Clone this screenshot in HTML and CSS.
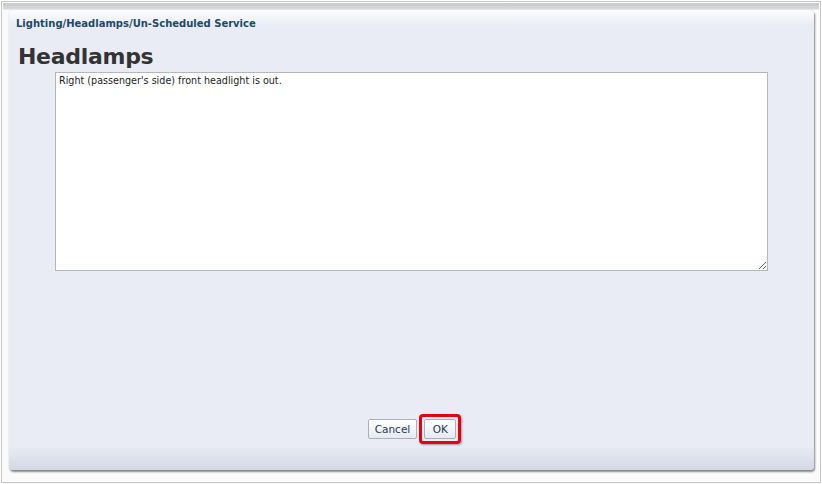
FILE: index.html
```html
<!DOCTYPE html>
<html>
<head>
<meta charset="utf-8">
<link rel="stylesheet" href="styles.css">
</head>
<body>
<div class="frame">
  <div class="backdrop">
    <div class="dialog">
      <div class="crumb">Lighting/Headlamps/Un-Scheduled Service</div>
      <h1 class="title">Headlamps</h1>
      <div class="field">
        <textarea class="notes">Right (passenger's side) front headlight is out.</textarea>
      </div>
      <div class="spacer"></div>
      <div class="actions">
        <button class="btn">Cancel</button>
        <span class="highlight"><button class="btn ok">OK</button></span>
      </div>
    </div>
  </div>
</div>
</body>
</html>
```
FILE: styles.css
```css
html, body {
  margin: 0;
  padding: 0;
  width: 822px;
  height: 484px;
  background: #ffffff;
  overflow: hidden;
}
.frame {
  box-sizing: border-box;
  width: 820px;
  height: 482px;
  margin: 1px 0 0 1px;
  border: 1px solid #c4c4c4;
  padding: 1px;
  background: #fff;
}
.backdrop {
  box-sizing: border-box;
  height: 100%;
  background: linear-gradient(#c7c8cc 0, #d8d9dc 6px, #fafafa 7px);
  padding: 7px 5px 11px 6px;
  display: flex;
}
.dialog {
  box-sizing: border-box;
  flex: 1;
  border-radius: 4px;
  background: linear-gradient(#fcfdfe 0, #e9ecf4 16px, #e9ecf4 436px, #d3d8e5 100%);
  box-shadow: 1px 2px 2px rgba(0,0,0,0.45), 0 0 1px rgba(0,0,0,0.25);
  display: flex;
  flex-direction: column;
  padding: 7px 0 0 0;
}
.crumb {
  font-family: "DejaVu Sans", Tahoma, sans-serif;
  font-weight: bold;
  font-size: 10px;
  color: #1e4a66;
  padding-left: 7px;
  line-height: 14px;
}
.title {
  margin: 14px 0 0 9px;
  font-family: "DejaVu Sans", sans-serif;
  font-weight: bold;
  font-size: 22px;
  line-height: 24px;
  color: #333333;
  letter-spacing: -0.3px;
}
.field {
  padding: 0 46px 0 46px;
  margin-top: 3px;
}
.notes {
  display: block;
  box-sizing: border-box;
  width: 100%;
  height: 199px;
  border: 1px solid #b3b6bb;
  background: #fff;
  font-family: "DejaVu Sans", sans-serif;
  font-size: 9.6px;
  color: #222;
  padding: 2px 3px;
  resize: both;
  margin: 0;
  outline: none;
}
.spacer {
  flex: 1;
}
.actions {
  display: flex;
  justify-content: center;
  align-items: center;
  gap: 2px;
  padding-left: 6px;
  margin-bottom: 26px;
}
.btn {
  font-family: "DejaVu Sans", sans-serif;
  font-size: 10.5px;
  color: #1e3a55;
  height: 20px;
  padding: 0 6px;
  border: 1px solid #a9b0bb;
  border-radius: 2px;
  background: linear-gradient(#ffffff, #e6eaf1);
  line-height: 18px;
}
.highlight {
  display: inline-block;
  border: 3px solid #e8000d;
  border-radius: 4px;
  padding: 2px 2px;
  box-shadow: 1px 1px 2px rgba(0,0,0,0.35);
}
.ok {
  display: block;
  width: 32px;
  padding: 0;
}
```
